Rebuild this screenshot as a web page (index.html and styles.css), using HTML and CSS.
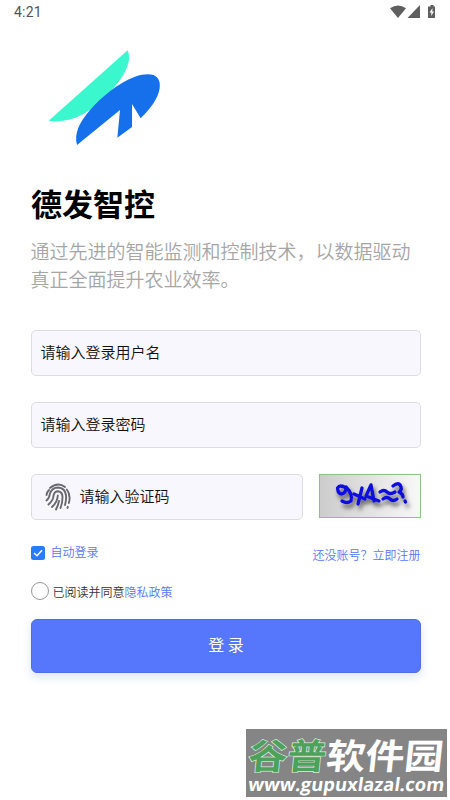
FILE: index.html
```html
<!DOCTYPE html>
<html lang="zh-CN">
<head>
<meta charset="utf-8">
<title>德发智控</title>
<link rel="stylesheet" href="styles.css">
</head>
<body>
<header class="status">
  <span class="time">4:21</span>
  <svg class="status-icons" viewBox="0 0 47 14" width="47" height="14">
    <path d="M0 3.200Q8 -2.400 16 3.200L8 13Z"/>
    <path d="M30 0V13H17.500Z"/>
    <path d="M39 1.500h1.500V0h3v1.500H45V13h-7V1.500z"/>
    <path class="bolt" d="M42.500 3L39.500 7.500h1.800V11L44 6.500h-1.700z"/>
  </svg>
</header>
<main>
  <svg class="logo" viewBox="0 0 390 345" width="130" height="115">
    <path fill="#3bf7ce" d="M26 242L263 31C275 61 262 100 207 160C150 222 85 253 26 242Z"/>
    <path fill="#1670ec" d="M111 315C102 282 117 248 150 210C185 170 237 127 285 110C335 94 364 105 359 145C354 178 330 207 302 235L276 192V261L232 293L240 210Z"/>
  </svg>
  <h1>德发智控</h1>
  <p class="intro">通过先进的智能监测和控制技术，以数据驱动真正全面提升农业效率。</p>
  <form>
    <div class="field">请输入登录用户名</div>
    <div class="field">请输入登录密码</div>
    <div class="verify">
      <div class="field code">
        <svg class="finger" viewBox="0 0 26 28" width="26" height="28">
          <path d="M5 5Q13-1.500 20 4M1.500 12Q2 9 4 7M21.800 6.500Q25.500 11 24.300 18L23.800 20M1.500 17.500Q4.500 15 4.800 11Q7 4.500 13 4.500Q20 5 21 12Q21.500 17 20 22M3.500 21.500Q8.500 17 8.500 12.500Q9.500 8.300 13 8.300Q17.700 9 17.500 14.500Q17.500 20 15.500 25M7 24Q12.500 19 12.800 12.500M14 18Q13 23 11 26.500M22.800 23.800L22.500 25"/>
        </svg>
        <span>请输入验证码</span>
      </div>
      <svg class="captcha" viewBox="0 0 102 44" width="102" height="44">
        <defs>
          <linearGradient id="paper"><stop stop-color="#ccc"/><stop offset="1" stop-color="#f8f8f8"/></linearGradient>
          <filter id="shade" x="-20%" y="-20%" width="150%" height="180%"><feDropShadow dx="2" dy="4" stdDeviation="2" flood-color="#333" flood-opacity=".75"/></filter>
        </defs>
        <rect x=".5" y=".5" width="101" height="43" fill="url(#paper)" stroke="#8fc08a"/>
        <path class="ink" filter="url(#shade)" d="M27 14Q21 10 18.500 14Q19 20 23 20Q27 19 27 13Q34 20 32 27Q28 30 23 27M43 14L39 30M35 20L46 25M52 11L47 22L60 27M52 11L55 27M61 18Q65 15 68 18T76 18M64 25Q68 22 71 25T78 25M74 12Q80 7 82 13Q83 16 80 18Q84 20 84 23M86 27L86.500 28"/>
      </svg>
    </div>
    <div class="options">
      <label class="auto">
        <svg viewBox="0 0 14 14" width="14" height="14"><rect width="14" height="14" rx="2.500" fill="#277bff"/><path d="M3 7L6 9.700L11 4.200" fill="none" stroke="#fff" stroke-width="1.500"/></svg>
        <span>自动登录</span>
      </label>
      <a class="register">还没账号？立即注册</a>
    </div>
    <label class="agree"><span class="radio"></span><span>已阅读并同意<a>隐私政策</a></span></label>
    <div class="submit">登 录</div>
  </form>
</main>
<aside class="watermark">
  <div class="brand"><span>谷普</span>软件园</div>
  <div class="site">www.gupuxlazal.com</div>
</aside>
</body>
</html>
```
FILE: styles.css
```css
* { box-sizing: border-box; }
body {
  margin: 0;
  height: 800px;
  overflow: hidden;
  background: #fff;
  font-family: "Noto Sans CJK SC", sans-serif;
}
.status {
  height: 24px;
  padding: 0 14px;
  display: flex;
  align-items: center;
  justify-content: space-between;
  font: 400 14px/24px Roboto, sans-serif;
  letter-spacing: .2px;
  color: #555;
}
.status-icons { fill: #5f5f5f; margin-right: -1px; }
.status-icons .bolt { fill: #fff; }
main { padding: 16px 29px 0 31px; }
.logo { display: block; margin-left: 9px; }
h1 {
  margin: 25px 0 0;
  font-size: 31px;
  line-height: 46px;
  font-weight: 700;
  color: #000;
}
.intro {
  margin: 11px -1px 37px -.5px;
  font-size: 19px;
  font-weight: 350;
  line-height: 28px;
  color: #a6a6a6;
}
.field {
  height: 46px;
  padding: 0 8.5px;
  margin-bottom: 26px;
  border: 1px solid #dcdce2;
  border-radius: 5px;
  background: #f7f7fd;
  font-size: 15px;
  font-weight: 350;
  line-height: 42px;
  color: #111;
}
.verify { display: flex; justify-content: space-between; }
.code {
  width: 272px;
  display: flex;
  gap: 8.5px;
  padding-left: 13px;
}
.finger {
  margin-top: 8px;
  fill: none;
  stroke: #69696d;
  stroke-width: 1.9;
  stroke-linecap: round;
}
.ink {
  fill: none;
  stroke: #0c0ce0;
  stroke-width: 3.3;
  stroke-linecap: round;
  stroke-linejoin: round;
}
.options {
  display: flex;
  justify-content: space-between;
  font-size: 12px;
  font-weight: 350;
  line-height: 18px;
  color: #5677fc;
}
.auto { display: flex; align-items: center; gap: 5.5px; height: 14px; }
.auto span { margin-top: -2px; }
.register { margin-right: .5px; }
.agree {
  display: flex;
  align-items: center;
  gap: 3.5px;
  margin-top: 18px;
  height: 18px;
  font-size: 12px;
  font-weight: 350;
  color: #333;
}
.agree a { color: #5677fc; }
.radio { width: 18px; height: 18px; border: 1px solid #999; border-radius: 50%; }
.submit {
  height: 54px;
  margin-top: 19px;
  border: 1px solid #4f6de6;
  border-radius: 6px;
  background: #5677fc;
  box-shadow: 0 4px 10px rgba(86, 119, 252, .2);
  color: #fff;
  font-size: 16px;
  line-height: 48px;
  text-align: center;
}
.watermark {
  position: absolute;
  left: 246px;
  top: 729px;
  width: 201px;
  height: 68px;
  overflow: hidden;
  background: #858585;
  color: #fff;
  text-align: center;
}
.brand {
  height: 45px;
  font-size: 39px;
  line-height: 51px;
  font-weight: 700;
  white-space: nowrap;
  transform: skewX(-6deg) scaleY(.9);
}
.brand span { color: #4ca25a; -webkit-text-stroke: 1.5px #dcefdc; paint-order: stroke fill; }
.site {
  font: 700 18.4px/20px "Open Sans", sans-serif;
  white-space: nowrap;
  transform: skewX(-8deg);
}
```
